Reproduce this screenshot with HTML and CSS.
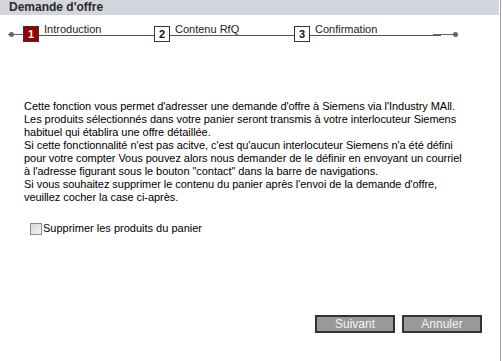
FILE: index.html
```html
<!DOCTYPE html>
<html lang="fr">
<head>
<meta charset="utf-8">
<title>Demande d'offre</title>
<link rel="stylesheet" href="styles.css">
</head>
<body>
<div class="page">
  <div class="title-bar">Demande d'offre</div>
  <div class="steps">
    <div class="cap-left"><span class="dot"></span></div>
    <div class="step step-1">
      <div class="num active">1</div>
      <div class="label">Introduction</div>
    </div>
    <div class="step step-2">
      <div class="num">2</div>
      <div class="label">Contenu RfQ</div>
    </div>
    <div class="step step-3">
      <div class="num">3</div>
      <div class="label">Confirmation</div>
    </div>
    <div class="cap-right"><span class="dot"></span></div>
  </div>
  <div class="intro">
    Cette fonction vous permet d'adresser une demande d'offre à Siemens via l'Industry MAll.<br>
    Les produits sélectionnés dans votre panier seront transmis à votre interlocuteur Siemens<br>
    habituel qui établira une offre détaillée.<br>
    Si cette fonctionnalité n'est pas acitve, c'est qu'aucun interlocuteur Siemens n'a été défini<br>
    pour votre compter Vous pouvez alors nous demander de le définir en envoyant un courriel<br>
    à l'adresse figurant sous le bouton "contact" dans la barre de navigations.<br>
    Si vous souhaitez supprimer le contenu du panier après l'envoi de la demande d'offre,<br>
    veuillez cocher la case ci-après.
  </div>
  <label class="check"><span class="box"></span>Supprimer les produits du panier</label>
  <div class="actions">
    <button class="btn">Suivant</button>
    <button class="btn">Annuler</button>
  </div>
</div>
</body>
</html>
```
FILE: styles.css
```css
html, body {
  margin: 0;
  padding: 0;
  background: #fff;
}
body {
  font-family: "Liberation Sans", Arial, sans-serif;
  color: #000;
}
.page {
  width: 500px;
  height: 361px;
  border-right: 1px solid #9c9c9c;
  display: flex;
  flex-direction: column;
}
.title-bar {
  margin-right: 1px;
  height: 15px;
  line-height: 15px;
  background: #d3d6dc;
  color: #2b2b2b;
  font-weight: bold;
  font-size: 12px;
  padding-left: 9px;
}
.steps {
  display: flex;
  margin-top: 11px;
  height: 16px;
  font-size: 11px;
  color: #222;
}
.cap-left {
  width: 15px;
  margin-left: 8px;
  height: 8px;
  border-bottom: 1px solid #666;
  position: relative;
}
.cap-right {
  width: 23px;
  margin-left: -8px;
  height: 8px;
  border-bottom: 1px solid #666;
  position: relative;
}
.dot {
  position: absolute;
  width: 5px;
  height: 5px;
  border-radius: 50%;
  background: #666;
  top: 6px;
}
.cap-left .dot { left: 1px; }
.cap-right .dot { right: -2px; }
.step {
  display: flex;
}
.step-1 { width: 131px; }
.step-2 { width: 140px; }
.step-3 { width: 147px; }
.num {
  width: 14px;
  height: 14px;
  border: 1px solid #333;
  background: #fff;
  font-size: 11px;
  font-weight: bold;
  line-height: 15px;
  text-align: center;
  color: #111;
  flex: none;
}
.num.active {
  background: #990000;
  color: #fff;
}
.label {
  flex: 1;
  height: 9px;
  line-height: 7px;
  padding-left: 5px;
  border-bottom: 1px solid #555;
  white-space: nowrap;
  color: #222;
}
.intro {
  margin-top: 58px;
  margin-left: 24px;
  font-size: 11px;
  line-height: 13px;
  letter-spacing: -0.05px;
  white-space: nowrap;
}
.check {
  display: flex;
  align-items: center;
  margin-top: 18px;
  margin-left: 30px;
  font-size: 11px;
  line-height: 13px;
}
.box {
  width: 10px;
  height: 10px;
  border: 1px solid #8a8a8a;
  background: linear-gradient(135deg, #d8d8d8, #f4f4f4);
  margin-right: 1px;
}
.actions {
  margin-top: auto;
  margin-bottom: 28px;
  display: flex;
  justify-content: flex-end;
  gap: 7px;
  padding-right: 18px;
}
.btn {
  width: 80px;
  height: 18px;
  padding: 0;
  border: 2px solid #333;
  background: #999;
  color: #f2f2f2;
  font-family: "Liberation Sans", Arial, sans-serif;
  font-size: 12px;
  line-height: 14px;
}
```
